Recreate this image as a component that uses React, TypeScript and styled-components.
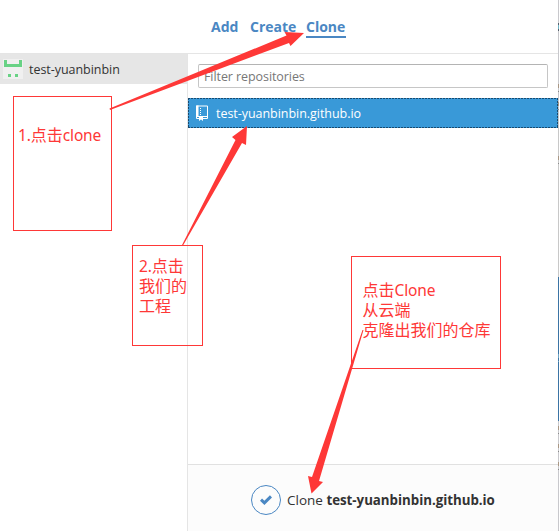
import React from "react";
import styled, { createGlobalStyle } from "styled-components";

const GlobalStyle = createGlobalStyle`
  * { box-sizing: border-box; }
  body { margin: 0; overflow: hidden; background: #fff; }
`;

const Window = styled.div`
  position: relative;
  display: grid;
  grid-template-columns: 558px 1px;
  width: 559px;
  height: 531px;
  font-family: "Open Sans", "Noto Sans", sans-serif;
  font-size: 12.5px;
  color: #333;
  overflow: hidden;
`;

const Dialog = styled.div`
  display: grid;
  grid-template-rows: 54px 1fr;
  height: 531px;
  background: #fff;
`;

const Edge = styled.div`
  background: linear-gradient(
    #c8c8cc 0 23px, #555f6c 23px 25px, #72b5c6 25px 29px, #555f6c 29px 31px,
    #c8c8cc 31px 84px, #a99784 84px 88px, #c8c8cc 88px 91px, #888 91px 92px,
    #c8c8cc 92px 102px, #a99784 102px 106px, #c8c8cc 106px 109px, #888 109px 110px,
    #c8c8c8 110px 156px, #a99784 156px 160px, #c8c8c8 160px 163px, #888 163px 164px,
    #c8c8c8 164px 277px, #3b74a5 277px 354px, #6fa4c4 354px 358px, #3b74a5 358px 361px,
    #6fa4c4 361px 362px, #3b74a5 362px 421px, #c8c8cc 421px 426px, #a99784 426px 430px,
    #c8c8cc 430px 433px, #888 433px 434px, #c8c8cc 434px 444px, #a99784 444px 448px,
    #c8c8cc 448px 451px, #888 451px 452px, #c8c8cc 452px 462px, #a99784 462px 466px,
    #c8c8cc 466px 469px, #888 469px 470px, #c8c8cc 470px
  );
`;

const Tabs = styled.nav`
  display: flex;
  gap: 10px;
  padding: 17px 0 0 211px;
  border-bottom: 1px solid #e5e5e5;
`;

const Tab = styled.a<{ $width: number; $active?: boolean }>`
  width: ${(p) => p.$width}px;
  height: 21px;
  font-size: 14px;
  line-height: 20px;
  font-weight: 700;
  letter-spacing: 0;
  white-space: nowrap;
  color: #4a87c3;
  border-bottom: 2px solid ${(p) => (p.$active ? "#4a87c3" : "transparent")};
`;

const Body = styled.div`
  display: grid;
  grid-template-columns: 188px 1fr;
  min-height: 0;
`;

const Sidebar = styled.aside`
  border-right: 1px solid #e5e5e5;
`;

const Account = styled.div`
  display: flex;
  align-items: center;
  gap: 6px;
  height: 30px;
  padding-left: 3px;
  background: #e6e6e6;
  letter-spacing: -0.04px;
  white-space: nowrap;
`;

const Main = styled.main`
  display: flex;
  flex-direction: column;
`;

const Filter = styled.input`
  width: 350px;
  height: 24px;
  margin: 10px 0 0 10px;
  padding: 0 5px;
  border: 1px solid #c6c6c6;
  border-top-color: #b4b4b4;
  border-radius: 2px;
  outline: none;
  font: inherit;
  letter-spacing: -0.08px;
  &::placeholder { color: #777; opacity: 1; }
`;

const Repo = styled.div`
  display: flex;
  align-items: center;
  height: 30px;
  margin-top: 10px;
  padding-left: 8px;
  gap: 7px;
  color: #fff;
  letter-spacing: -0.04px;
  white-space: nowrap;
  background:
    repeating-linear-gradient(90deg, #174a70 0 2px, #3999d8 2px 3px) top / 100% 1px no-repeat,
    repeating-linear-gradient(90deg, #174a70 0 2px, #3999d8 2px 3px) bottom / 100% 1px no-repeat,
    repeating-linear-gradient(#174a70 0 2px, #3999d8 2px 3px) left / 1px 100% no-repeat,
    repeating-linear-gradient(#174a70 0 2px, #3999d8 2px 3px) right / 1px 100% no-repeat,
    #3999d8;
`;

const Footer = styled.footer`
  display: flex;
  align-items: center;
  gap: 6px;
  height: 67px;
  margin-top: auto;
  padding: 3px 0 0 63px;
  border-top: 1px solid #e1e1e1;
  background: #fcfcfc;
  white-space: nowrap;
`;

const Check = styled.span`
  display: grid;
  place-items: center;
  width: 30px;
  height: 30px;
  border: 1px solid #4a87c3;
  border-radius: 50%;
`;

const CloneLabel = styled.span`
  font-size: 13.5px;
  padding-top: 1px;
`;

const RepoName = styled.b`
  font-size: 13.3px;
  letter-spacing: -0.02px;
`;

const Note = styled.div<{ $x: number; $y: number; $w: number; $h: number; $pad: string }>`
  position: absolute;
  left: ${(p) => p.$x}px;
  top: ${(p) => p.$y}px;
  width: ${(p) => p.$w}px;
  height: ${(p) => p.$h}px;
  padding: ${(p) => p.$pad};
  border: 1px solid #fe3837;
  color: #fe3837;
  font: 16px/20px "Noto Sans", "Noto Sans CJK SC", sans-serif;
  white-space: pre;
`;

const Latin = styled.span`
  font-size: 15.5px;
  letter-spacing: -0.15px;
`;

const Arrows = styled.svg`
  position: absolute;
  inset: 0;
  pointer-events: none;
`;

const Identicon = () => (
  <svg width="20" height="20" shapeRendering="crispEdges">
    <path fill="#f0f0f0" d="M0 0h20v20H0z" />
    <path fill="#68d285" d="M1 1h3v4h12V1h3v7H1zM5 15h3v3H5zM12 15h3v3h-3z" />
  </svg>
);

const RepoIcon = () => (
  <svg width="13" height="16" viewBox="0 0 13 16" fill="none">
    <path d="M.5 1h11v12.500H.5z" stroke="#fff" />
    <path d="M0 .5h2.500v11H0zM0 11h12v1H0zM3 12h4v4L5 14.500 3 16z" fill="#fff" />
    <path d="M4 3h1v1H4zM4 5h1v1H4zM4 7h1v1H4zM4 9h1v1H4z" fill="#fff" />
  </svg>
);

export default function App() {
  return (
    <Window>
      <GlobalStyle />
      <Dialog>
        <Tabs>
          <Tab $width={29}>Add</Tab>
          <Tab $width={46}>Create</Tab>
          <Tab $width={40} $active>Clone</Tab>
        </Tabs>
        <Body>
          <Sidebar>
            <Account><Identicon />test-yuanbinbin</Account>
          </Sidebar>
          <Main>
            <Filter placeholder="Filter repositories" />
            <Repo><RepoIcon />test-yuanbinbin.github.io</Repo>
            <Footer>
              <Check>
                <svg width="12" height="10" viewBox="0 0 12 10" fill="none" stroke="#4a87c3" strokeWidth="3">
                  <path d="M1 4.700l3.400 3.200L11 1.400" />
                </svg>
              </Check>
              <CloneLabel>Clone <RepoName>test-yuanbinbin.github.io</RepoName></CloneLabel>
            </Footer>
          </Main>
        </Body>
      </Dialog>
      <Edge />
      <Note $x={13} $y={96} $w={99} $h={135} $pad="28px 0 0 4px"><Latin>1.</Latin>点击<Latin>clone</Latin></Note>
      <Note $x={132} $y={245} $w={71} $h={101} $pad="10px 0 0 6px"><Latin>2.</Latin>点击{"\n"}我们的{"\n"}工程</Note>
      <Note $x={351} $y={256} $w={150} $h={113} $pad="23px 0 0 10.5px">点击<Latin>Clone</Latin>{"\n"}从云端{"\n"}克隆出我们的仓库</Note>
      <Arrows width="559" height="531" fill="#fe3837">
        <path d="M109.500 108.500L286.500 35.500L284.500 32L304 33L290.500 46L289 43L110 110z" />
        <path d="M182 245L235.500 140L232 137L247 126L246 145L242 143L183 245.500z" />
        <path d="M363.500 330L319 481L323 482L311.500 493.500L308 476L312 477L362.500 330z" />
      </Arrows>
    </Window>
  );
}
